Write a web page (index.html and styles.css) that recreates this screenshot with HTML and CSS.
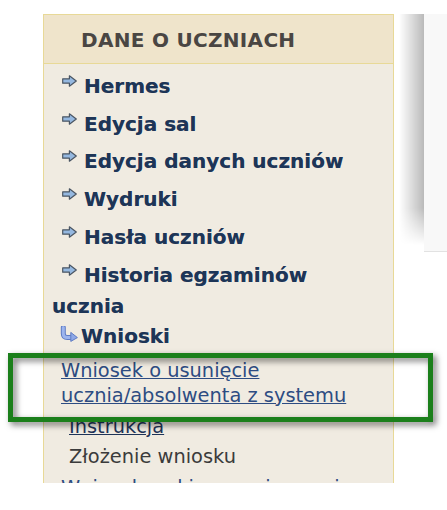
FILE: index.html
```html
<!DOCTYPE html>
<html lang="pl">
<head>
<meta charset="utf-8">
<title>Dane o uczniach</title>
<link rel="stylesheet" href="styles.css">
</head>
<body>
<div class="page">
  <div class="panel">
    <div class="panel-head">DANE O UCZNIACH</div>
    <ul class="menu">
      <li class="item"><svg class="arrow" viewBox="0 0 15 12" width="15" height="12"><path d="M0.7 3.8H7.4V0.8L14.3 6L7.4 11.2V8.2H0.7Z" fill="#95b8e0" stroke="#4b5663" stroke-width="1.2" stroke-linejoin="round"/></svg>Hermes</li>
      <li class="item"><svg class="arrow" viewBox="0 0 15 12" width="15" height="12"><path d="M0.7 3.8H7.4V0.8L14.3 6L7.4 11.2V8.2H0.7Z" fill="#95b8e0" stroke="#4b5663" stroke-width="1.2" stroke-linejoin="round"/></svg>Edycja sal</li>
      <li class="item"><svg class="arrow" viewBox="0 0 15 12" width="15" height="12"><path d="M0.7 3.8H7.4V0.8L14.3 6L7.4 11.2V8.2H0.7Z" fill="#95b8e0" stroke="#4b5663" stroke-width="1.2" stroke-linejoin="round"/></svg>Edycja danych uczniów</li>
      <li class="item"><svg class="arrow" viewBox="0 0 15 12" width="15" height="12"><path d="M0.7 3.8H7.4V0.8L14.3 6L7.4 11.2V8.2H0.7Z" fill="#95b8e0" stroke="#4b5663" stroke-width="1.2" stroke-linejoin="round"/></svg>Wydruki</li>
      <li class="item"><svg class="arrow" viewBox="0 0 15 12" width="15" height="12"><path d="M0.7 3.8H7.4V0.8L14.3 6L7.4 11.2V8.2H0.7Z" fill="#95b8e0" stroke="#4b5663" stroke-width="1.2" stroke-linejoin="round"/></svg>Hasła uczniów</li>
      <li class="item"><svg class="arrow" viewBox="0 0 15 12" width="15" height="12"><path d="M0.7 3.8H7.4V0.8L14.3 6L7.4 11.2V8.2H0.7Z" fill="#95b8e0" stroke="#4b5663" stroke-width="1.2" stroke-linejoin="round"/></svg>Historia egzaminów ucznia</li>
      <li class="item item-open"><svg class="bent" viewBox="0 0 18 16" width="18" height="16"><path d="M3.3 1.5V7.6Q3.3 11.6 7.3 11.6H11.5" fill="none" stroke="#5f7cc4" stroke-width="5" stroke-linecap="round"/><path d="M3.3 1.5V7.6Q3.3 11.6 7.3 11.6H11.5" fill="none" stroke="#9db5ee" stroke-width="3" stroke-linecap="round"/><path d="M10.8 6.4L17.4 11.6L10.8 15.4Z" fill="#8ea8e8" stroke="#5f7cc4" stroke-width="1" stroke-linejoin="round"/></svg>Wnioski</li>
    </ul>
    <ul class="sub">
      <li class="sub-item"><a class="sub-link" href="#">Wniosek o usunięcie ucznia/absolwenta z systemu</a></li>
      <li class="sub-item sub-deep"><a class="deep-link" href="#">Instrukcja</a></li>
      <li class="sub-item sub-deep sub-tight"><span class="plain">Złożenie wniosku</span></li>
      <li class="sub-item"><a class="sub-link sub-next" href="#">Wniosek o skierowanie ucznia</a></li>
    </ul>
  </div>
  <div class="shade"></div>
  <div class="aside"></div>
</div>
<div class="highlight"></div>
</body>
</html>
```
FILE: styles.css
```css
html, body {
  margin: 0;
  padding: 0;
  background: #ffffff;
}

body {
  position: relative;
  width: 447px;
  height: 510px;
  overflow: hidden;
  font-family: "DejaVu Sans", Verdana, sans-serif;
}

.page {
  display: flex;
  align-items: flex-start;
  padding: 14px 0 0 43px;
}

.panel {
  box-sizing: border-box;
  width: 351px;
  height: 469px;
  flex: none;
  overflow: hidden;
  background: #f0ebe1;
  border: 1px solid #e8d997;
  border-bottom: 0;
}

.panel-head {
  box-sizing: border-box;
  height: 49px;
  padding: 3px 0 0 37px;
  line-height: 45px;
  font-size: 20px;
  font-weight: bold;
  letter-spacing: 0.3px;
  color: #4a4643;
  background: #efe4cb;
  border-bottom: 1px solid #e8d997;
}

.menu {
  list-style: none;
  margin: 0;
  padding: 0;
}

.item {
  padding: 6.8px 20px 0 8px;
  line-height: 31px;
  font-size: 20px;
  font-weight: bold;
  color: #1d3557;
  text-shadow: 0 0 0.4px rgba(29, 53, 87, 0.6);
}

.arrow {
  display: inline-block;
  vertical-align: 6px;
  margin: 0 7px 0 10px;
}

.item-open {
  padding-top: 0;
  margin-top: -1px;
}

.bent {
  display: inline-block;
  vertical-align: 1px;
  margin: 0 3px 0 8px;
}

.sub {
  list-style: none;
  margin: 0;
  padding: 0;
}

.sub-item {
  margin-top: 6px;
  padding: 0 20px 0 17px;
  line-height: 25px;
  font-size: 19.4px;
}

.sub-deep {
  padding-left: 25px;
}

.sub-tight {
  margin-top: 5px;
}

.sub-link {
  color: #2d4c82;
  text-decoration: underline;
}

.deep-link {
  color: #1f3458;
  text-decoration: underline;
}

.sub-next {
  white-space: nowrap;
}

.plain {
  color: #3b3b3b;
}

.shade {
  flex: none;
  width: 25px;
  height: 231px;
  margin-left: 5px;
  background: linear-gradient(to right, rgba(0, 0, 0, 0), rgba(0, 0, 0, 0.27));
  -webkit-mask-image: linear-gradient(to bottom, #000 84%, transparent 100%);
  mask-image: linear-gradient(to bottom, #000 84%, transparent 100%);
}

.aside {
  flex: 1;
  height: 237px;
  background: #f8f8f8;
  border-bottom: 1px solid #e2e2e2;
}

.highlight {
  position: absolute;
  left: 8px;
  top: 353px;
  box-sizing: border-box;
  width: 425px;
  height: 69px;
  border: 5px solid #1b7f1b;
  filter: drop-shadow(3px 3px 3px rgba(0, 0, 0, 0.55));
}
```
